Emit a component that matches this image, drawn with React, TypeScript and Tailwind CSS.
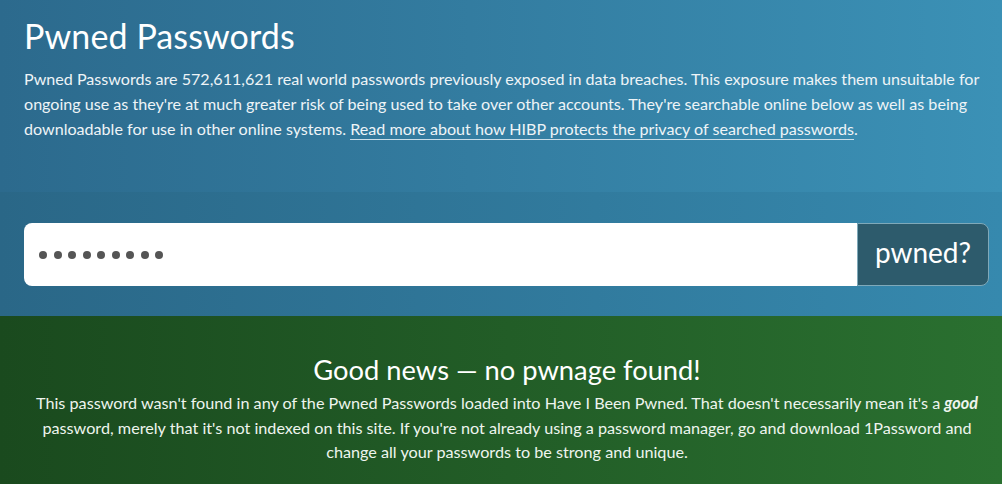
import React from "react";

export default function App() {
  const font = { fontFamily: "Lato, 'Open Sans', sans-serif" };
  return (
    <div className="w-[1002px] h-[484px] overflow-hidden flex flex-col" style={font}>
      <div className="h-[192px] bg-gradient-to-r from-[#2c6a8d] to-[#3b91b6] px-[24px] pt-[14px]">
        <h1 className="text-[34px] leading-[44px] text-white font-normal tracking-[0.1px]">Pwned Passwords</h1>
        <p className="mt-[8px] text-[16.1px] leading-[25px] text-[#eef4f7] whitespace-nowrap">
          Pwned Passwords are 572,611,621 real world passwords previously exposed in data breaches. This exposure makes them unsuitable for
          <br />
          ongoing use as they're at much greater risk of being used to take over other accounts. They're searchable online below as well as being
          <br />
          downloadable for use in other online systems.{" "}
          <a className="border-b border-[#c9dde8] pb-[1px] text-[#eef4f7]">Read more about how HIBP protects the privacy of searched passwords</a>.
        </p>
      </div>
      <div className="h-[124px] bg-gradient-to-r from-[#2a6787] to-[#3689ae] px-[24px] pt-[31px]">
        <div className="flex h-[63px] w-[965px]">
          <div className="flex-1 bg-white rounded-l-[8px] flex items-center pl-[15px] gap-[6.5px]">
            {Array.from({ length: 9 }).map((_, i) => (
              <span key={i} className="w-[8px] h-[8px] rounded-full bg-[#555555]" />
            ))}
          </div>
          <div className="w-[132px] bg-[#2d5b6c] border border-[#7fa9b9] rounded-r-[8px] flex items-center justify-center text-white text-[28px] pb-[5px]">
            pwned?
          </div>
        </div>
      </div>
      <div className="flex-1 bg-gradient-to-r from-[#1a4a1e] to-[#2a7030] flex flex-col items-center pt-[37px] pl-[12px] text-white">
        <h2 className="text-[27.3px] leading-[34px] font-normal">Good news — no pwnage found!</h2>
        <p className="mt-[4px] text-[16.2px] leading-[24.5px] text-center text-[#eef5ee] whitespace-nowrap">
          This password wasn't found in any of the Pwned Passwords loaded into Have I Been Pwned. That doesn't necessarily mean it's a <em className="font-bold">good</em>
          <br />
          password, merely that it's not indexed on this site. If you're not already using a password manager, go and download 1Password and
          <br />
          change all your passwords to be strong and unique.
        </p>
      </div>
    </div>
  );
}
